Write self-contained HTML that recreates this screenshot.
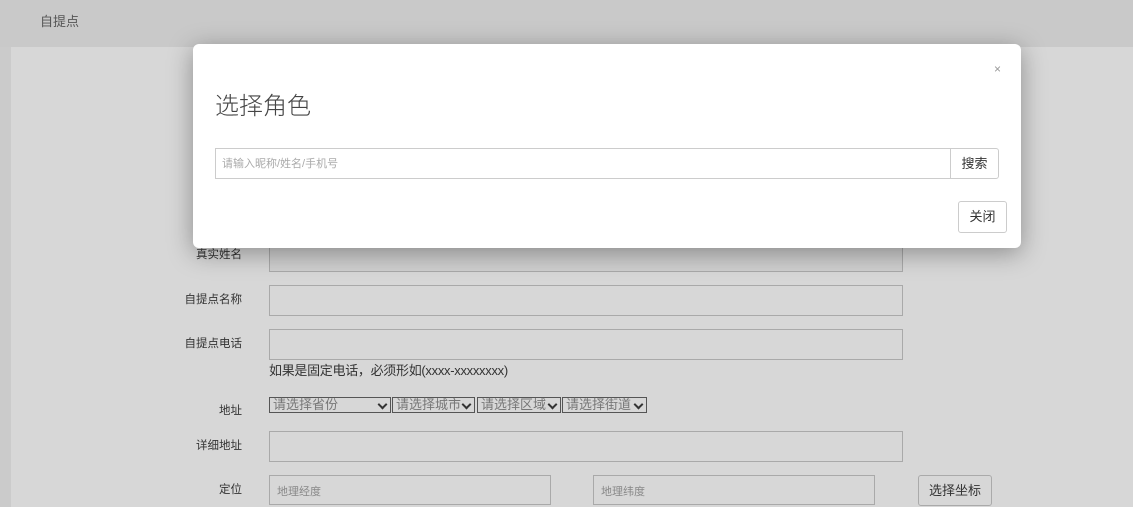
<!DOCTYPE html>
<html><head><meta charset="utf-8"><style>
*{box-sizing:border-box;margin:0;padding:0}
body{width:1133px;height:507px;overflow:hidden;background:#cbcbcb;font-family:"Liberation Sans","Noto Sans CJK SC",sans-serif;position:relative;color:#333}
.top{position:absolute;left:0;top:0;width:1133px;height:47px;background:#c9c9c9}
.top span{position:absolute;left:40px;top:11px;font-size:13px;color:#555}
.content{position:absolute;left:11px;top:47px;right:0;bottom:0;background:#d7d7d7}
.lbl{position:absolute;width:120px;left:122px;text-align:right;font-size:11.5px;color:#333}
.inp{position:absolute;border:1px solid #a9a9a9;background:#d7d7d7;font-size:11px;color:#888;padding:7px 0 0 7px}
.sel{position:absolute;top:397px;height:16px;border:1px solid #555;font-size:13px;color:#777;line-height:13px;padding-left:3px;background:#d7d7d7}
.sel:after{content:"";position:absolute;right:4px;top:3px;width:5px;height:5px;border-right:2px solid #333;border-bottom:2px solid #333;transform:rotate(45deg)}
.modal{position:absolute;left:193px;top:44px;width:828px;height:204px;background:#fff;border-radius:6px;box-shadow:0 5px 25px rgba(0,0,0,.35)}
.btn{position:absolute;border:1px solid #ccc;border-radius:3px;background:#fff;font-size:13px;color:#333;text-align:center}
</style></head><body>
<div class="top"><span>自提点</span></div>
<div class="content"></div>
<div class="lbl" style="top:246px">真实姓名</div>
<div class="inp" style="left:269px;top:241px;width:634px;height:31px;background:#cfcfcf"></div>
<div class="lbl" style="top:291px">自提点名称</div>
<div class="inp" style="left:269px;top:285px;width:634px;height:31px"></div>
<div class="lbl" style="top:335px">自提点电话</div>
<div class="inp" style="left:269px;top:329px;width:634px;height:31px"></div>
<div style="position:absolute;left:269px;top:360px;font-size:13px;color:#333;letter-spacing:-0.3px">如果是固定电话，必须形如(xxxx-xxxxxxxx)</div>
<div class="lbl" style="top:402px">地址</div>
<div class="sel" style="left:269px;width:122px">请选择省份</div>
<div class="sel" style="left:392px;width:83px">请选择城市</div>
<div class="sel" style="left:477px;width:84px">请选择区域</div>
<div class="sel" style="left:562px;width:85px">请选择街道</div>
<div class="lbl" style="top:437px">详细地址</div>
<div class="inp" style="left:269px;top:431px;width:634px;height:31px"></div>
<div class="lbl" style="top:481px">定位</div>
<div class="inp" style="left:269px;top:475px;width:282px;height:30px">地理经度</div>
<div class="inp" style="left:593px;top:475px;width:282px;height:30px">地理纬度</div>
<div class="btn" style="left:918px;top:475px;width:74px;height:31px;background:#d7d7d7;border-color:#aaa;line-height:29px">选择坐标</div>
<div class="modal">
<div style="position:absolute;right:20px;top:18px;font-size:12px;color:#999">×</div>
<div style="position:absolute;left:22px;top:42px;font-size:24px;color:#444;font-weight:300">选择角色</div>
<div style="position:absolute;left:22px;top:104px;width:736px;height:31px;border:1px solid #ccc;font-size:11px;color:#aaa;padding:6px 0 0 6px">请输入昵称/姓名/手机号</div>
<div class="btn" style="left:757px;top:104px;width:49px;height:31px;border-radius:0 3px 3px 0;line-height:29px">搜索</div>
<div class="btn" style="left:765px;top:157px;width:49px;height:32px;line-height:30px">关闭</div>
</div>
</body></html>
